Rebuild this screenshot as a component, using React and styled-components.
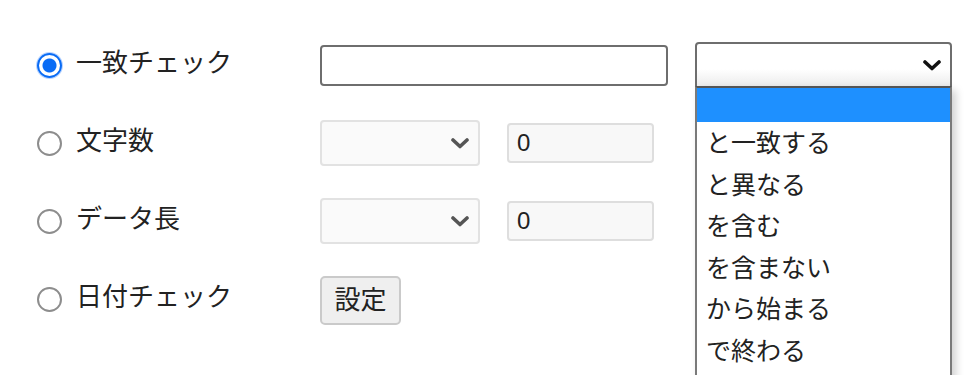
import styled, { createGlobalStyle } from 'styled-components';

const GlobalStyle = createGlobalStyle`
  html {
    overflow: hidden;
  }
  html, body {
    margin: 0;
    padding: 0;
    background: #fff;
  }
  body {
    min-height: 375px;
    font-family: "Noto Sans CJK JP", "Noto Sans", sans-serif;
    color: #222;
  }
`;

const Form = styled.div`
  display: flex;
  flex-direction: column;
  padding: 26px 0 0 37px;
`;

const Row = styled.div`
  display: flex;
  align-items: center;
  height: 78px;
`;

const Choice = styled.label`
  display: flex;
  align-items: center;
  gap: 14px;
  width: 283px;
  font-size: 26px;
  line-height: 1;
`;

const Radio = styled.span`
  flex: none;
  box-sizing: border-box;
  width: 25px;
  height: 25px;
  border-radius: 50%;
  border: ${p => (p.$checked ? '2.5px solid #0a6cf5' : '2px solid #8d8d8d')};
  background: ${p => (p.$checked
    ? 'radial-gradient(circle, #0a6cf5 0 6.5px, #fff 7.5px)'
    : '#fff')};
  box-shadow: ${p => (p.$checked ? '0 0 0 1px #b9d4ff' : 'none')};
`;

const ChoiceText = styled.span`
  padding-bottom: 8px;
`;

const Controls = styled.div`
  display: flex;
  align-items: center;
  gap: 27px;
`;

const TextBox = styled.input`
  box-sizing: border-box;
  width: ${p => p.$w}px;
  height: ${p => p.$h}px;
  border: 2px solid ${p => (p.disabled ? '#dedede' : '#6e6e6e')};
  border-radius: 4px;
  background: ${p => (p.disabled ? '#f8f8f8' : '#fff')};
  padding: 0 8px;
  font-family: "Liberation Sans", Arial, sans-serif;
  font-size: 24px;
  color: #222;
  outline: none;
`;

const SelectWrap = styled.div`
  position: relative;
`;

const SelectBox = styled.div`
  box-sizing: border-box;
  display: flex;
  align-items: center;
  justify-content: flex-end;
  width: ${p => p.$w}px;
  height: 46px;
  padding-right: 9px;
  border: 2px solid ${p => (p.$disabled ? '#e2e2e2' : '#6e6e6e')};
  border-radius: ${p => (p.$open ? '4px 4px 0 0' : '4px')};
  background: ${p => (p.$disabled
    ? '#fafafa'
    : 'linear-gradient(#fff 0 60%, #ececec 100%)')};
  color: ${p => (p.$disabled ? '#505050' : '#111')};
`;

const DropList = styled.ul`
  position: absolute;
  top: 44px;
  left: 0;
  box-sizing: border-box;
  width: 100%;
  margin: 0;
  padding: 0 0 12px;
  list-style: none;
  border: 2px solid #7a7a7a;
  border-top-color: #555;
  border-bottom: none;
  background: #fff;
  box-shadow: 4px 4px 8px rgba(0, 0, 0, 0.18);
  z-index: 2;
`;

const Option = styled.li`
  box-sizing: border-box;
  height: ${p => (p.$blank ? '34px' : '41.5px')};
  display: flex;
  align-items: center;
  padding-left: 9px;
  padding-bottom: 2px;
  font-size: 25px;
  line-height: 1;
  background: ${p => (p.$active ? '#1e90ff' : '#fff')};
  color: #222;
  white-space: nowrap;
`;

const Button = styled.button`
  box-sizing: border-box;
  width: 81px;
  height: 49px;
  margin-top: 2px;
  border: 2px solid #cacaca;
  border-radius: 5px;
  background: #efefef;
  font-family: "Noto Sans CJK JP", sans-serif;
  font-size: 26px;
  line-height: 1;
  color: #222;
  padding: 0 0 4px;
`;

const Chevron = ({ color }) => (
  <svg width="18" height="11" viewBox="0 0 18 11">
    <path d="M2 2 L9 8.5 L16 2" fill="none" stroke={color} strokeWidth="3.6" strokeLinecap="round" strokeLinejoin="round" />
  </svg>
);

const Select = ({ w, disabled, open, options }) => (
  <SelectWrap>
    <SelectBox $w={w} $disabled={disabled} $open={open}>
      <Chevron color={disabled ? '#555' : '#111'} />
    </SelectBox>
    {open && (
      <DropList>
        {options.map((o, i) => (
          <Option key={i} $blank={o === ''} $active={i === 0}>{o}</Option>
        ))}
      </DropList>
    )}
  </SelectWrap>
);

const matchOptions = ['', 'と一致する', 'と異なる', 'を含む', 'を含まない', 'から始まる', 'で終わる'];

export default function App() {
  return (
    <>
      <GlobalStyle />
      <Form>
        <Row>
          <Choice>
            <Radio $checked />
            <ChoiceText>一致チェック</ChoiceText>
          </Choice>
          <Controls>
            <TextBox $w={348} $h={41} defaultValue="" />
            <Select w={257} open options={matchOptions} />
          </Controls>
        </Row>
        <Row>
          <Choice>
            <Radio />
            <ChoiceText>文字数</ChoiceText>
          </Choice>
          <Controls>
            <Select w={160} disabled />
            <TextBox $w={147} $h={40} disabled defaultValue="0" />
          </Controls>
        </Row>
        <Row>
          <Choice>
            <Radio />
            <ChoiceText>データ長</ChoiceText>
          </Choice>
          <Controls>
            <Select w={160} disabled />
            <TextBox $w={147} $h={40} disabled defaultValue="0" />
          </Controls>
        </Row>
        <Row>
          <Choice>
            <Radio />
            <ChoiceText>日付チェック</ChoiceText>
          </Choice>
          <Controls>
            <Button>設定</Button>
          </Controls>
        </Row>
      </Form>
    </>
  );
}
